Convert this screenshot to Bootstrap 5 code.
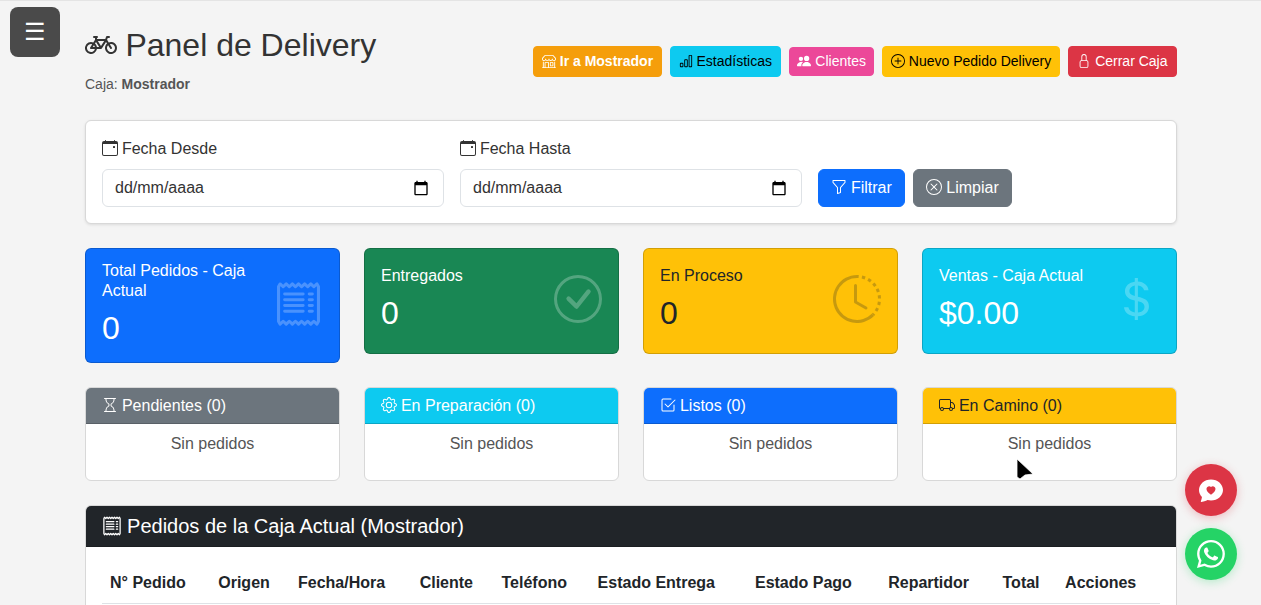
<!DOCTYPE html>
<html lang="es">
<head>
    <meta charset="UTF-8">
    <meta name="viewport" content="width=device-width, initial-scale=1.0">
    <title>Panel de Delivery</title>
    <link href="https://cdn.jsdelivr.net/npm/bootstrap@5.3.0/dist/css/bootstrap.min.css" rel="stylesheet">
    <style>
        html, body { overflow: hidden; }
        body {
            background: #f4f4f4;
            border-top: 1px solid #e4e4e4;
            font-family: "Liberation Sans", Arial, sans-serif;
            color: #333;
        }
        .ico { width: 1em; height: 1em; fill: currentColor; vertical-align: -.125em; }
        .titulo .ico, .filtro .ico, .estado .ico, .pedidos .ico { margin-right: -.5px; }
        .menu-toggle {
            position: fixed; top: 7px; left: 10px;
            width: 50px; height: 50px;
            background: #4a4a4a; border-radius: 8px;
            color: #fff; font-size: 24px;
            display: flex; align-items: center; justify-content: center;
        }
        .contenido { padding: 0 84px 0 85px; }
        .cabecera { height: 119px; }
        .titulo { font-size: 32px; line-height: 38px; margin: 0; padding-top: 25px; color: #333; font-weight: 400; }
        .subtitulo { font-size: 14px; color: #555; margin: 10px 0 0; line-height: 21px; }
        .acciones { margin-top: 45px; }
        .acciones .btn { padding-left: 7.5px; padding-right: 7.5px; }
        .acciones .btn-info { padding-left: 8px; padding-right: 8px; }
        .acciones .btn-danger { padding-left: 8.5px; padding-right: 8.5px; }
        .btn-mostrador { background: #f59e0b; color: #fff; font-weight: 700; border: 1px solid #f59e0b; }
        .btn-clientes { background: #ec4899; color: #fff; border: 1px solid #ec4899; padding-top: 3px; padding-bottom: 3px; }
        .filtro { border-color: #d8d8d8; box-shadow: 0 1px 3px rgba(0,0,0,.1); }
        .filtro label { color: #333; }
        .filtro .form-control { color: #333; }
        .filtro .btn { padding-right: 12.5px; }
        .caja-fecha { position: relative; }
        .caja-fecha svg { position: absolute; right: 15px; top: 11px; width: 16px; height: 16px; fill: #000; pointer-events: none; }
        .stat-body { padding: 12px 16px; min-height: 104px; }
        .stat-titulo { font-size: 16px; line-height: 20px; margin-bottom: 8px; }
        .stat-valor { font-size: 32px; line-height: 38.4px; margin-bottom: 3px; }
        .stat-ico { width: 48px; height: 48px; fill: currentColor; opacity: .25; flex: none; margin-bottom: 4px; }
        .stat-ico-recibo { width: 43px; height: 46px; margin-right: 3px; }
        .texto-oscuro { color: #212529; }
        .estado { border-color: #d8d8d8; height: 94px; }
        .estado .card-header { padding: 8px 16px; line-height: 19.2px; height: 36px; }
        .sin-pedidos { color: #555; line-height: 24px; padding-top: 8px; }
        .pedidos { border-color: #d8d8d8; }
        .pedidos .card-header { font-size: 20px; line-height: 24px; padding: 8px 16px; background: #212529; color: #fff; }
        .pedidos th { font-weight: 700; padding: 8px; white-space: nowrap; color: #212529; }
        .flotante {
            position: fixed; right: 24px;
            width: 52px; height: 52px; border-radius: 50%;
            display: flex; align-items: center; justify-content: center;
            color: #fff; font-size: 24px;
        }
        .flotante-rojo { top: 464px; background: #dc3545; box-shadow: 0 2px 10px rgba(220,53,69,.3); }
        .flotante-verde { top: 528px; background: #25d366; font-size: 28px; box-shadow: 0 2px 10px rgba(37,211,102,.3); }
        .puntero { position: fixed; left: 1016px; top: 458px; width: 18px; height: 23px; pointer-events: none; }
    </style>
</head>
<body>
    <div class="menu-toggle">☰</div>

    <div class="contenido">
        <div class="cabecera d-flex justify-content-between align-items-start">
            <div>
                <h1 class="titulo">
                    <svg class="ico" viewBox="0 0 16 16"><path d="M4 4.5a.5.5 0 0 1 .5-.5H6a.5.5 0 0 1 0 1v.5h4.14l.386-1.158A.5.5 0 0 1 11 4h1a.5.5 0 0 1 0 1h-.64l-.311.935.807 1.29a3 3 0 1 1-.848.53l-.508-.812-2.076 3.322A.5.5 0 0 1 8 10.5H5.959a3 3 0 1 1-1.815-3.274L5 5.856V5h-.5a.5.5 0 0 1-.5-.5zm1.5 2.443-.508.814c.5.444.85 1.054.967 1.743h1.139L5.5 6.943zM8 9.057 9.598 6.5H6.402L8 9.057zM4.937 9.5a1.997 1.997 0 0 0-.487-.877l-.548.877h1.035zM3.603 8.092A2 2 0 1 0 4.937 10.5H3a.5.5 0 0 1-.424-.765l1.027-1.643zm7.947.53a2 2 0 1 0 .848-.53l1.026 1.643a.5.5 0 1 1-.848.53L11.55 8.623z"/></svg>
                    Panel de Delivery
                </h1>
                <p class="subtitulo">Caja: <strong>Mostrador</strong></p>
            </div>
            <div class="acciones d-flex gap-2 align-items-center">
                <a class="btn btn-sm btn-mostrador" href="#"><svg class="ico" viewBox="0 0 16 16"><path d="M2.97 1.35A1 1 0 0 1 3.73 1h8.54a1 1 0 0 1 .76.35l2.609 3.044A1.5 1.5 0 0 1 16 5.37v.255a2.375 2.375 0 0 1-4.25 1.458A2.371 2.371 0 0 1 9.875 8 2.37 2.37 0 0 1 8 7.083 2.37 2.37 0 0 1 6.125 8a2.37 2.37 0 0 1-1.875-.917A2.375 2.375 0 0 1 0 5.625V5.37a1.5 1.5 0 0 1 .361-.976l2.61-3.045zm1.78 4.275a1.375 1.375 0 0 0 2.75 0 .5.5 0 0 1 1 0 1.375 1.375 0 0 0 2.75 0 .5.5 0 0 1 1 0 1.375 1.375 0 1 0 2.75 0V5.37a.5.5 0 0 0-.12-.325L12.27 2H3.73L1.12 5.045A.5.5 0 0 0 1 5.37v.255a1.375 1.375 0 0 0 2.75 0 .5.5 0 0 1 1 0zM1.5 8.5A.5.5 0 0 1 2 9v6h1v-5a1 1 0 0 1 1-1h3a1 1 0 0 1 1 1v5h6V9a.5.5 0 0 1 1 0v6h.5a.5.5 0 0 1 0 1H.5a.5.5 0 0 1 0-1H1V9a.5.5 0 0 1 .5-.5zM4 15h3v-5H4v5zm5-5a1 1 0 0 1 1-1h2a1 1 0 0 1 1 1v3a1 1 0 0 1-1 1h-2a1 1 0 0 1-1-1v-3zm3 0h-2v3h2v-3z"/></svg> Ir a Mostrador</a>
                <a class="btn btn-sm btn-info" href="#"><svg class="ico" viewBox="0 0 16 16"><path d="M4 11H2v3h2v-3zm5-4H7v7h2V7zm5-5v12h-2V2h2zm-2-1a1 1 0 0 0-1 1v12a1 1 0 0 0 1 1h2a1 1 0 0 0 1-1V2a1 1 0 0 0-1-1h-2zM6 7a1 1 0 0 1 1-1h2a1 1 0 0 1 1 1v7a1 1 0 0 1-1 1H7a1 1 0 0 1-1-1V7zm-5 4a1 1 0 0 1 1-1h2a1 1 0 0 1 1 1v3a1 1 0 0 1-1 1H2a1 1 0 0 1-1-1v-3z"/></svg> Estadísticas</a>
                <a class="btn btn-sm btn-clientes" href="#"><svg class="ico" viewBox="0 0 16 16"><path d="M7 14s-1 0-1-1 1-4 5-4 5 3 5 4-1 1-1 1H7Zm4-6a3 3 0 1 0 0-6 3 3 0 0 0 0 6Zm-5.784 6A2.238 2.238 0 0 1 5 13c0-1.355.68-2.75 1.936-3.72A6.325 6.325 0 0 0 5 9c-4 0-5 3-5 4s1 1 1 1h4.216ZM4.5 8a2.5 2.5 0 1 0 0-5 2.5 2.5 0 0 0 0 5Z"/></svg> Clientes</a>
                <a class="btn btn-sm btn-warning" href="#"><svg class="ico" viewBox="0 0 16 16"><path d="M8 15A7 7 0 1 1 8 1a7 7 0 0 1 0 14zm0 1A8 8 0 1 0 8 0a8 8 0 0 0 0 16z"/><path d="M8 4a.5.5 0 0 1 .5.5v3h3a.5.5 0 0 1 0 1h-3v3a.5.5 0 0 1-1 0v-3h-3a.5.5 0 0 1 0-1h3v-3A.5.5 0 0 1 8 4z"/></svg> Nuevo Pedido Delivery</a>
                <a class="btn btn-sm btn-danger" href="#"><svg class="ico" viewBox="0 0 16 16"><path d="M8 1a2 2 0 0 1 2 2v4H6V3a2 2 0 0 1 2-2zm3 6V3a3 3 0 0 0-6 0v4a2 2 0 0 0-2 2v5a2 2 0 0 0 2 2h6a2 2 0 0 0 2-2V9a2 2 0 0 0-2-2zM5 8h6a1 1 0 0 1 1 1v5a1 1 0 0 1-1 1H5a1 1 0 0 1-1-1V9a1 1 0 0 1 1-1z"/></svg> Cerrar Caja</a>
            </div>
        </div>

        <div class="card filtro mb-4">
            <div class="card-body">
                <div class="row g-3 align-items-end">
                    <div class="col-4">
                        <label class="form-label"><svg class="ico" viewBox="0 0 16 16"><path d="M11 6.5a.5.5 0 0 1 .5-.5h1a.5.5 0 0 1 .5.5v1a.5.5 0 0 1-.5.5h-1a.5.5 0 0 1-.5-.5v-1z"/><path d="M3.5 0a.5.5 0 0 1 .5.5V1h8V.5a.5.5 0 0 1 1 0V1h1a2 2 0 0 1 2 2v11a2 2 0 0 1-2 2H2a2 2 0 0 1-2-2V3a2 2 0 0 1 2-2h1V.5a.5.5 0 0 1 .5-.5zM1 4v10a1 1 0 0 0 1 1h12a1 1 0 0 0 1-1V4H1z"/></svg> Fecha Desde</label>
                        <div class="caja-fecha">
                            <input type="text" class="form-control" value="dd/mm/aaaa">
                            <svg viewBox="0 0 24 24"><path d="M20 3h-1V1h-2v2H7V1H5v2H4c-1.1 0-2 .9-2 2v16c0 1.1.9 2 2 2h16c1.1 0 2-.9 2-2V5c0-1.1-.9-2-2-2zm0 18H4V8h16v13z"/></svg>
                        </div>
                    </div>
                    <div class="col-4">
                        <label class="form-label"><svg class="ico" viewBox="0 0 16 16"><path d="M11 6.5a.5.5 0 0 1 .5-.5h1a.5.5 0 0 1 .5.5v1a.5.5 0 0 1-.5.5h-1a.5.5 0 0 1-.5-.5v-1z"/><path d="M3.5 0a.5.5 0 0 1 .5.5V1h8V.5a.5.5 0 0 1 1 0V1h1a2 2 0 0 1 2 2v11a2 2 0 0 1-2 2H2a2 2 0 0 1-2-2V3a2 2 0 0 1 2-2h1V.5a.5.5 0 0 1 .5-.5zM1 4v10a1 1 0 0 0 1 1h12a1 1 0 0 0 1-1V4H1z"/></svg> Fecha Hasta</label>
                        <div class="caja-fecha">
                            <input type="text" class="form-control" value="dd/mm/aaaa">
                            <svg viewBox="0 0 24 24"><path d="M20 3h-1V1h-2v2H7V1H5v2H4c-1.1 0-2 .9-2 2v16c0 1.1.9 2 2 2h16c1.1 0 2-.9 2-2V5c0-1.1-.9-2-2-2zm0 18H4V8h16v13z"/></svg>
                        </div>
                    </div>
                    <div class="col-4 d-flex gap-2">
                        <button class="btn btn-primary"><svg class="ico" viewBox="0 0 16 16"><path d="M1.5 1.5A.5.5 0 0 1 2 1h12a.5.5 0 0 1 .5.5v2a.5.5 0 0 1-.128.334L10 8.692V13.5a.5.5 0 0 1-.342.474l-3 1A.5.5 0 0 1 6 14.5V8.692L1.628 3.834A.5.5 0 0 1 1.5 3.5v-2zm1 .5v1.308l4.372 4.858A.5.5 0 0 1 7 8.5v5.306l2-.666V8.5a.5.5 0 0 1 .128-.334L13.5 3.308V2h-11z"/></svg> Filtrar</button>
                        <button class="btn btn-secondary"><svg class="ico" viewBox="0 0 16 16"><path d="M8 15A7 7 0 1 1 8 1a7 7 0 0 1 0 14zm0 1A8 8 0 1 0 8 0a8 8 0 0 0 0 16z"/><path d="M4.646 4.646a.5.5 0 0 1 .708 0L8 7.293l2.646-2.647a.5.5 0 0 1 .708.708L8.707 8l2.647 2.646a.5.5 0 0 1-.708.708L8 8.707l-2.646 2.647a.5.5 0 0 1-.708-.708L7.293 8 4.646 5.354a.5.5 0 0 1 0-.708z"/></svg> Limpiar</button>
                    </div>
                </div>
            </div>
        </div>

        <div class="row g-4 align-items-start mb-4">
            <div class="col-3">
                <div class="card text-bg-primary">
                    <div class="stat-body d-flex justify-content-between align-items-center">
                        <div>
                            <div class="stat-titulo">Total Pedidos - Caja Actual</div>
                            <div class="stat-valor">0</div>
                        </div>
                        <svg class="stat-ico stat-ico-recibo" viewBox="1 0 14 16" preserveAspectRatio="none"><path d="M1.92.506a.5.5 0 0 1 .434.14L3 1.293l.646-.647a.5.5 0 0 1 .708 0L5 1.293l.646-.647a.5.5 0 0 1 .708 0L7 1.293l.646-.647a.5.5 0 0 1 .708 0L9 1.293l.646-.647a.5.5 0 0 1 .708 0l.646.647.646-.647a.5.5 0 0 1 .708 0l.646.647.646-.647a.5.5 0 0 1 .801.13l.5 1A.5.5 0 0 1 15 2v12a.5.5 0 0 1-.053.224l-.5 1a.5.5 0 0 1-.8.13L13 14.707l-.646.647a.5.5 0 0 1-.708 0L11 14.707l-.646.647a.5.5 0 0 1-.708 0L9 14.707l-.646.647a.5.5 0 0 1-.708 0L7 14.707l-.646.647a.5.5 0 0 1-.708 0L5 14.707l-.646.647a.5.5 0 0 1-.708 0L3 14.707l-.646.647a.5.5 0 0 1-.801-.13l-.5-1A.5.5 0 0 1 1 14V2a.5.5 0 0 1 .053-.224l.5-1a.5.5 0 0 1 .367-.27zm.217 1.338L2 2.118v11.764l.137.274.51-.51a.5.5 0 0 1 .707 0l.646.647.646-.646a.5.5 0 0 1 .708 0l.646.646.646-.646a.5.5 0 0 1 .708 0l.646.646.646-.646a.5.5 0 0 1 .708 0l.646.646.646-.646a.5.5 0 0 1 .708 0l.646.646.646-.646a.5.5 0 0 1 .708 0l.509.509.137-.274V2.118l-.137-.274-.51.51a.5.5 0 0 1-.707 0L12 1.707l-.646.647a.5.5 0 0 1-.708 0L10 1.707l-.646.647a.5.5 0 0 1-.708 0L8 1.707l-.646.647a.5.5 0 0 1-.708 0L6 1.707l-.646.647a.5.5 0 0 1-.708 0L4 1.707l-.646.647a.5.5 0 0 1-.708 0l-.509-.51z"/><path d="M3 4.5a.5.5 0 0 1 .5-.5h6a.5.5 0 1 1 0 1h-6a.5.5 0 0 1-.5-.5zm0 2a.5.5 0 0 1 .5-.5h6a.5.5 0 1 1 0 1h-6a.5.5 0 0 1-.5-.5zm0 2a.5.5 0 0 1 .5-.5h6a.5.5 0 1 1 0 1h-6a.5.5 0 0 1-.5-.5zm0 2a.5.5 0 0 1 .5-.5h6a.5.5 0 0 1 0 1h-6a.5.5 0 0 1-.5-.5zm8-6a.5.5 0 0 1 .5-.5h1a.5.5 0 0 1 0 1h-1a.5.5 0 0 1-.5-.5zm0 2a.5.5 0 0 1 .5-.5h1a.5.5 0 0 1 0 1h-1a.5.5 0 0 1-.5-.5zm0 2a.5.5 0 0 1 .5-.5h1a.5.5 0 0 1 0 1h-1a.5.5 0 0 1-.5-.5zm0 2a.5.5 0 0 1 .5-.5h1a.5.5 0 0 1 0 1h-1a.5.5 0 0 1-.5-.5z"/></svg>
                    </div>
                </div>
            </div>
            <div class="col-3">
                <div class="card text-bg-success">
                    <div class="stat-body d-flex justify-content-between align-items-center">
                        <div>
                            <div class="stat-titulo">Entregados</div>
                            <div class="stat-valor">0</div>
                        </div>
                        <svg class="stat-ico" viewBox="0 0 16 16"><path d="M8 15A7 7 0 1 1 8 1a7 7 0 0 1 0 14zm0 1A8 8 0 1 0 8 0a8 8 0 0 0 0 16z"/><path d="M10.97 4.97a.235.235 0 0 0-.02.022L7.477 9.417 5.384 7.323a.75.75 0 0 0-1.06 1.06L6.97 11.03a.75.75 0 0 0 1.079-.02l3.992-4.99a.75.75 0 0 0-1.071-1.05z"/></svg>
                    </div>
                </div>
            </div>
            <div class="col-3">
                <div class="card bg-warning texto-oscuro">
                    <div class="stat-body d-flex justify-content-between align-items-center">
                        <div>
                            <div class="stat-titulo">En Proceso</div>
                            <div class="stat-valor">0</div>
                        </div>
                        <svg class="stat-ico" viewBox="0 0 16 16"><path d="M8.515 1.019A7 7 0 0 0 8 1V0a8 8 0 0 1 .589.022l-.074.997zm2.004.45a7.003 7.003 0 0 0-.985-.299l.219-.976c.383.086.76.2 1.126.342l-.36.933zm1.37.71a7.01 7.01 0 0 0-.439-.27l.493-.87a8.025 8.025 0 0 1 .979.654l-.615.789a6.996 6.996 0 0 0-.418-.302zm1.834 1.79a6.99 6.99 0 0 0-.653-.796l.724-.69c.27.285.52.59.747.91l-.818.576zm.744 1.352a7.08 7.08 0 0 0-.214-.468l.893-.45a7.976 7.976 0 0 1 .45 1.088l-.95.313a7.023 7.023 0 0 0-.179-.483zm.53 2.507a6.991 6.991 0 0 0-.1-1.025l.985-.17c.067.386.106.778.116 1.17l-1 .025zm-.131 1.538c.033-.17.06-.339.081-.51l.993.123a7.957 7.957 0 0 1-.23 1.155l-.964-.267c.046-.165.086-.332.12-.501zm-.952 2.379c.184-.29.346-.594.486-.908l.914.405c-.16.36-.345.706-.555 1.038l-.845-.535zm-.964 1.205c.122-.122.239-.248.35-.378l.758.653a8.073 8.073 0 0 1-.401.432l-.707-.707z"/><path d="M8 1a7 7 0 1 0 4.95 11.95l.707.707A8.001 8.001 0 1 1 8 0v1z"/><path d="M7.5 3a.5.5 0 0 1 .5.5v5.21l3.248 1.856a.5.5 0 0 1-.496.868l-3.5-2A.5.5 0 0 1 7 9V3.5a.5.5 0 0 1 .5-.5z"/></svg>
                    </div>
                </div>
            </div>
            <div class="col-3">
                <div class="card bg-info text-white">
                    <div class="stat-body d-flex justify-content-between align-items-center">
                        <div>
                            <div class="stat-titulo">Ventas - Caja Actual</div>
                            <div class="stat-valor">$0.00</div>
                        </div>
                        <svg class="stat-ico" viewBox="0 0 16 16"><path d="M4 10.781c.148 1.667 1.513 2.85 3.591 3.003V15h1.043v-1.216c2.27-.179 3.678-1.438 3.678-3.3 0-1.59-.947-2.51-2.956-3.028l-.722-.187V3.467c1.122.11 1.879.714 2.07 1.616h1.47c-.166-1.6-1.54-2.748-3.54-2.875V1H7.591v1.233c-1.939.23-3.27 1.472-3.27 3.156 0 1.454.966 2.483 2.661 2.917l.61.162v4.031c-1.149-.17-1.94-.8-2.131-1.718H4zm3.391-3.836c-1.043-.263-1.6-.825-1.6-1.616 0-.944.704-1.641 1.8-1.828v3.495l-.2-.05zm1.591 1.872c1.287.323 1.852.859 1.852 1.769 0 1.097-.826 1.828-2.2 1.939V8.73l.348.086z"/></svg>
                    </div>
                </div>
            </div>
        </div>

        <div class="row g-4 mb-4">
            <div class="col-3">
                <div class="card estado">
                    <div class="card-header text-bg-secondary"><svg class="ico" viewBox="0 0 16 16"><path d="M2 1.5a.5.5 0 0 1 .5-.5h11a.5.5 0 0 1 0 1h-1v1a4.5 4.5 0 0 1-2.557 4.06c-.29.139-.443.377-.443.59v.7c0 .213.154.451.443.59A4.5 4.5 0 0 1 12.5 13v1h1a.5.5 0 0 1 0 1h-11a.5.5 0 1 1 0-1h1v-1a4.5 4.5 0 0 1 2.557-4.06c.29-.139.443-.377.443-.59v-.7c0-.213-.154-.451-.443-.59A4.5 4.5 0 0 1 3.5 3V2h-1a.5.5 0 0 1-.5-.5zm2.5.5v1a3.5 3.5 0 0 0 1.989 3.158c.533.256 1.011.791 1.011 1.491v.702c0 .7-.478 1.235-1.011 1.491A3.5 3.5 0 0 0 4.5 13v1h7v-1a3.5 3.5 0 0 0-1.989-3.158C8.978 9.586 8.5 9.052 8.5 8.351v-.702c0-.7.478-1.235 1.011-1.491A3.5 3.5 0 0 0 11.5 3V2h-7z"/></svg> Pendientes (0)</div>
                    <div class="sin-pedidos text-center">Sin pedidos</div>
                </div>
            </div>
            <div class="col-3">
                <div class="card estado">
                    <div class="card-header bg-info text-white"><svg class="ico" viewBox="0 0 16 16"><path d="M8 4.754a3.246 3.246 0 1 0 0 6.492 3.246 3.246 0 0 0 0-6.492zM5.754 8a2.246 2.246 0 1 1 4.492 0 2.246 2.246 0 0 1-4.492 0z"/><path d="M9.796 1.343c-.527-1.79-3.065-1.79-3.592 0l-.094.319a.873.873 0 0 1-1.255.52l-.292-.16c-1.64-.892-3.433.902-2.54 2.541l.159.292a.873.873 0 0 1-.52 1.255l-.319.094c-1.79.527-1.79 3.065 0 3.592l.319.094a.873.873 0 0 1 .52 1.255l-.16.292c-.892 1.64.901 3.434 2.541 2.54l.292-.159a.873.873 0 0 1 1.255.52l.094.319c.527 1.79 3.065 1.79 3.592 0l.094-.319a.873.873 0 0 1 1.255-.52l.292.16c1.64.893 3.434-.902 2.54-2.541l-.159-.292a.873.873 0 0 1 .52-1.255l.319-.094c1.79-.527 1.79-3.065 0-3.592l-.319-.094a.873.873 0 0 1-.52-1.255l.16-.292c.893-1.64-.902-3.433-2.541-2.54l-.292.159a.873.873 0 0 1-1.255-.52l-.094-.319zm-2.633.283c.246-.835 1.428-.835 1.674 0l.094.319a1.873 1.873 0 0 0 2.693 1.115l.291-.16c.764-.415 1.6.42 1.184 1.185l-.159.292a1.873 1.873 0 0 0 1.116 2.692l.318.094c.835.246.835 1.428 0 1.674l-.319.094a1.873 1.873 0 0 0-1.115 2.693l.16.291c.415.764-.42 1.6-1.185 1.184l-.291-.159a1.873 1.873 0 0 0-2.693 1.116l-.094.318c-.246.835-1.428.835-1.674 0l-.094-.319a1.873 1.873 0 0 0-2.692-1.115l-.292.16c-.764.415-1.6-.42-1.184-1.185l.159-.291A1.873 1.873 0 0 0 1.945 8.93l-.319-.094c-.835-.246-.835-1.428 0-1.674l.319-.094A1.873 1.873 0 0 0 3.06 4.377l-.16-.292c-.415-.764.42-1.6 1.185-1.184l.292.159a1.873 1.873 0 0 0 2.692-1.115l.094-.319z"/></svg> En Preparación (0)</div>
                    <div class="sin-pedidos text-center">Sin pedidos</div>
                </div>
            </div>
            <div class="col-3">
                <div class="card estado">
                    <div class="card-header text-bg-primary"><svg class="ico" viewBox="0 0 16 16"><path d="M3 14.5A1.5 1.5 0 0 1 1.5 13V3A1.5 1.5 0 0 1 3 1.5h8a.5.5 0 0 1 0 1H3a.5.5 0 0 0-.5.5v10a.5.5 0 0 0 .5.5h10a.5.5 0 0 0 .5-.5V8a.5.5 0 0 1 1 0v5a1.5 1.5 0 0 1-1.5 1.5H3z"/><path d="m8.354 10.354 7-7a.5.5 0 0 0-.708-.708L8 9.293 5.354 6.646a.5.5 0 1 0-.708.708l3 3a.5.5 0 0 0 .708 0z"/></svg> Listos (0)</div>
                    <div class="sin-pedidos text-center">Sin pedidos</div>
                </div>
            </div>
            <div class="col-3">
                <div class="card estado">
                    <div class="card-header bg-warning texto-oscuro"><svg class="ico" viewBox="0 0 16 16"><path d="M0 3.5A1.5 1.5 0 0 1 1.5 2h9A1.5 1.5 0 0 1 12 3.5V5h1.02a1.5 1.5 0 0 1 1.17.563l1.481 1.85a1.5 1.5 0 0 1 .329.938V10.5a1.5 1.5 0 0 1-1.5 1.5H14a2 2 0 1 1-4 0H5a2 2 0 1 1-3.998-.085A1.5 1.5 0 0 1 0 10.5v-7zm1.294 7.456A1.999 1.999 0 0 1 4.732 11h5.536a2.01 2.01 0 0 1 .732-.732V3.5a.5.5 0 0 0-.5-.5h-9a.5.5 0 0 0-.5.5v7a.5.5 0 0 0 .294.456zM12 10a2 2 0 0 1 1.732 1h.768a.5.5 0 0 0 .5-.5V8.35a.5.5 0 0 0-.11-.312l-1.48-1.85A.5.5 0 0 0 13.02 6H12v4zm-9 1a1 1 0 1 0 0 2 1 1 0 0 0 0-2zm9 0a1 1 0 1 0 0 2 1 1 0 0 0 0-2z"/></svg> En Camino (0)</div>
                    <div class="sin-pedidos text-center">Sin pedidos</div>
                </div>
            </div>
        </div>

        <div class="card pedidos">
            <div class="card-header"><svg class="ico" viewBox="0 0 16 16"><path d="M1.92.506a.5.5 0 0 1 .434.14L3 1.293l.646-.647a.5.5 0 0 1 .708 0L5 1.293l.646-.647a.5.5 0 0 1 .708 0L7 1.293l.646-.647a.5.5 0 0 1 .708 0L9 1.293l.646-.647a.5.5 0 0 1 .708 0l.646.647.646-.647a.5.5 0 0 1 .708 0l.646.647.646-.647a.5.5 0 0 1 .801.13l.5 1A.5.5 0 0 1 15 2v12a.5.5 0 0 1-.053.224l-.5 1a.5.5 0 0 1-.8.13L13 14.707l-.646.647a.5.5 0 0 1-.708 0L11 14.707l-.646.647a.5.5 0 0 1-.708 0L9 14.707l-.646.647a.5.5 0 0 1-.708 0L7 14.707l-.646.647a.5.5 0 0 1-.708 0L5 14.707l-.646.647a.5.5 0 0 1-.708 0L3 14.707l-.646.647a.5.5 0 0 1-.801-.13l-.5-1A.5.5 0 0 1 1 14V2a.5.5 0 0 1 .053-.224l.5-1a.5.5 0 0 1 .367-.27zm.217 1.338L2 2.118v11.764l.137.274.51-.51a.5.5 0 0 1 .707 0l.646.647.646-.646a.5.5 0 0 1 .708 0l.646.646.646-.646a.5.5 0 0 1 .708 0l.646.646.646-.646a.5.5 0 0 1 .708 0l.646.646.646-.646a.5.5 0 0 1 .708 0l.646.646.646-.646a.5.5 0 0 1 .708 0l.509.509.137-.274V2.118l-.137-.274-.51.51a.5.5 0 0 1-.707 0L12 1.707l-.646.647a.5.5 0 0 1-.708 0L10 1.707l-.646.647a.5.5 0 0 1-.708 0L8 1.707l-.646.647a.5.5 0 0 1-.708 0L6 1.707l-.646.647a.5.5 0 0 1-.708 0L4 1.707l-.646.647a.5.5 0 0 1-.708 0l-.509-.51z"/><path d="M3 4.5a.5.5 0 0 1 .5-.5h6a.5.5 0 1 1 0 1h-6a.5.5 0 0 1-.5-.5zm0 2a.5.5 0 0 1 .5-.5h6a.5.5 0 1 1 0 1h-6a.5.5 0 0 1-.5-.5zm0 2a.5.5 0 0 1 .5-.5h6a.5.5 0 1 1 0 1h-6a.5.5 0 0 1-.5-.5zm0 2a.5.5 0 0 1 .5-.5h6a.5.5 0 0 1 0 1h-6a.5.5 0 0 1-.5-.5zm8-6a.5.5 0 0 1 .5-.5h1a.5.5 0 0 1 0 1h-1a.5.5 0 0 1-.5-.5zm0 2a.5.5 0 0 1 .5-.5h1a.5.5 0 0 1 0 1h-1a.5.5 0 0 1-.5-.5zm0 2a.5.5 0 0 1 .5-.5h1a.5.5 0 0 1 0 1h-1a.5.5 0 0 1-.5-.5zm0 2a.5.5 0 0 1 .5-.5h1a.5.5 0 0 1 0 1h-1a.5.5 0 0 1-.5-.5z"/></svg> Pedidos de la Caja Actual (Mostrador)</div>
            <div class="card-body">
                <table class="table mb-0">
                    <thead>
                        <tr>
                            <th>N° Pedido</th><th>Origen</th><th>Fecha/Hora</th><th>Cliente</th><th>Teléfono</th><th>Estado Entrega</th><th>Estado Pago</th><th>Repartidor</th><th>Total</th><th>Acciones</th>
                        </tr>
                    </thead>
                </table>
            </div>
        </div>
    </div>

    <a class="flotante flotante-rojo" href="#"><svg class="ico" viewBox="0 0 16 16"><path d="M8 15c4.418 0 8-3.134 8-7s-3.582-7-8-7-8 3.134-8 7c0 1.76.743 3.37 1.97 4.6-.097 1.016-.417 2.13-.771 2.966-.079.186.074.394.273.362 2.256-.37 3.597-.938 4.18-1.234A9.06 9.06 0 0 0 8 15Zm0-9.007c1.664-1.711 5.825 1.283 0 5.132-5.825-3.85-1.664-6.843 0-5.132Z"/></svg></a>
    <a class="flotante flotante-verde" href="#"><svg class="ico" viewBox="0 0 16 16"><path d="M13.601 2.326A7.854 7.854 0 0 0 7.994 0C3.627 0 .068 3.558.064 7.926c0 1.399.366 2.76 1.057 3.965L0 16l4.204-1.102a7.933 7.933 0 0 0 3.79.965h.004c4.368 0 7.926-3.558 7.93-7.93A7.898 7.898 0 0 0 13.6 2.326zM7.994 14.521a6.573 6.573 0 0 1-3.356-.92l-.24-.144-2.494.654.666-2.433-.156-.251a6.56 6.56 0 0 1-1.007-3.505c0-3.626 2.957-6.584 6.591-6.584a6.56 6.56 0 0 1 4.66 1.931 6.557 6.557 0 0 1 1.928 4.66c-.004 3.639-2.961 6.592-6.592 6.592zm3.615-4.934c-.197-.099-1.17-.578-1.353-.646-.182-.065-.315-.099-.445.099-.133.197-.513.646-.627.775-.114.133-.232.148-.43.05-.197-.1-.836-.308-1.592-.985-.59-.525-.985-1.175-1.103-1.372-.114-.198-.011-.304.088-.403.087-.088.197-.232.296-.346.1-.114.133-.198.198-.33.065-.134.034-.248-.015-.347-.05-.099-.445-1.076-.612-1.47-.16-.389-.323-.335-.445-.34-.114-.007-.247-.007-.38-.007a.729.729 0 0 0-.529.247c-.182.198-.691.677-.691 1.654 0 .977.71 1.916.81 2.049.098.133 1.394 2.132 3.383 2.992.47.205.84.326 1.129.418.475.152.904.129 1.246.08.38-.058 1.171-.48 1.338-.943.164-.464.164-.86.114-.943-.049-.084-.182-.133-.38-.232z"/></svg></a>

    <svg class="puntero" viewBox="0 0 18 23"><path d="M1 1 L17 16 L9 17 L4 21 L1 19 Z" fill="#000" stroke="#fff" stroke-width=".8" stroke-linejoin="round"/></svg>

    <script src="https://cdn.jsdelivr.net/npm/bootstrap@5.3.0/dist/js/bootstrap.bundle.min.js"></script>
</body>
</html>
